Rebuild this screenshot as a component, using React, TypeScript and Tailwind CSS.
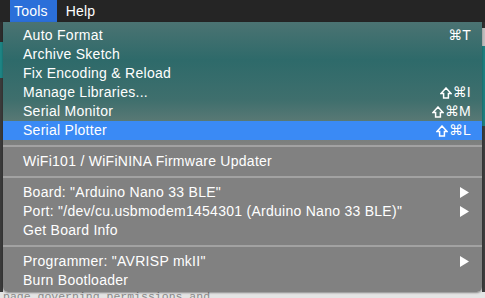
import React from 'react'

type Item =
  | { kind: 'item'; label: string; shift?: boolean; key?: string; sub?: boolean; active?: boolean }
  | { kind: 'sep' }

const items: Item[] = [
  { kind: 'item', label: 'Auto Format', key: 'T' },
  { kind: 'item', label: 'Archive Sketch' },
  { kind: 'item', label: 'Fix Encoding & Reload' },
  { kind: 'item', label: 'Manage Libraries...', shift: true, key: 'I' },
  { kind: 'item', label: 'Serial Monitor', shift: true, key: 'M' },
  { kind: 'item', label: 'Serial Plotter', shift: true, key: 'L', active: true },
  { kind: 'sep' },
  { kind: 'item', label: 'WiFi101 / WiFiNINA Firmware Updater' },
  { kind: 'sep' },
  { kind: 'item', label: 'Board: "Arduino Nano 33 BLE"', sub: true },
  { kind: 'item', label: 'Port: "/dev/cu.usbmodem1454301 (Arduino Nano 33 BLE)"', sub: true },
  { kind: 'item', label: 'Get Board Info' },
  { kind: 'sep' },
  { kind: 'item', label: 'Programmer: "AVRISP mkII"', sub: true },
  { kind: 'item', label: 'Burn Bootloader' },
]

const Arrow = () => (
  <svg width="9" height="11" viewBox="0 0 9 11" className="mr-[2px]">
    <path d="M0 0 L9 5.5 L0 11 Z" fill="#ffffff" />
  </svg>
)

const Shift = () => (
  <svg width="12" height="12" viewBox="0 0 12 12" className="mr-[1px]">
    <path
      d="M6 1 L11 6.4 H8.4 V11 H3.6 V6.4 H1 Z"
      fill="none"
      stroke="#ffffff"
      strokeWidth="1.5"
      strokeLinejoin="miter"
    />
  </svg>
)

const App = () => {
  return (
    <div
      className="relative w-[485px] h-[298px] overflow-hidden bg-[#e4e4e4] text-white"
      style={{ fontFamily: '"Liberation Sans", Arial, sans-serif' }}
    >
      {/* menu bar */}
      <div className="flex h-[22px] items-center bg-[#252525] pl-[10px] text-[14px] tracking-[0.2px]">
        <div className="flex h-full items-center bg-[#2b6fd9] pl-[4px] pr-[9px]">Tools</div>
        <div className="flex h-full items-center px-[9px]">Help</div>
      </div>

      {/* window behind the menu */}
      <div className="flex h-[270px]">
        <div className="flex w-[3px] flex-col">
          <div className="h-[20px] bg-[#2c2c2c]" />
          <div className="h-[36px] bg-[#1d8484]" />
          <div className="flex-1 bg-[#3a3a3a]" />
        </div>
        <div className="flex-1" />
        <div className="flex w-[3px] flex-col">
          <div className="h-[6px] bg-[#2e2e2e]" />
          <div className="h-[18px] bg-[#bdbdbd]" />
          <div className="h-[80px] bg-[#1e7f7f]" />
          <div className="flex-1 bg-[#3c3c3c]" />
        </div>
      </div>
      <div
        className="-mt-[2px] pl-[3px] text-[11.5px] leading-[14px] text-[#8a8a8a]"
        style={{ fontFamily: '"Liberation Mono", monospace' }}
      >
        page governing permissions and
      </div>

      {/* dropdown */}
      <div className="absolute left-[3px] top-[22px] w-[479px] rounded-b-[5px] bg-[linear-gradient(to_bottom,#4b7372_0px,#2e6a6a_38px,#3f6f6d_78px,#5a7975_100px,#7a7f7d_118px,#818181_124px,#818181_100%)] pb-[2px] pt-[4px] text-[14px] tracking-[0.27px] shadow-[0_1px_2px_rgba(0,0,0,0.4)]">
        {items.map((it, i) =>
          it.kind === 'sep' ? (
            <div key={i} className="flex h-[12px] items-center">
              <div className="h-[2px] w-full bg-[#a2a2a2]" />
            </div>
          ) : (
            <div
              key={i}
              className={`flex h-[19px] items-center justify-between pl-[20px] pr-[11px] ${it.active ? 'bg-[#3a8af5]' : ''}`}
            >
              <span>{it.label}</span>
              {it.key && (
                <span className="flex items-center">
                  {it.shift && <Shift />}
                  <span
                    className="text-[14px] tracking-[0px]"
                    style={{ fontFamily: '"DejaVu Sans", sans-serif' }}
                  >
                    ⌘
                  </span>
                  <span>{it.key}</span>
                </span>
              )}
              {it.sub && <Arrow />}
            </div>
          )
        )}
      </div>
    </div>
  )
}

export default App
